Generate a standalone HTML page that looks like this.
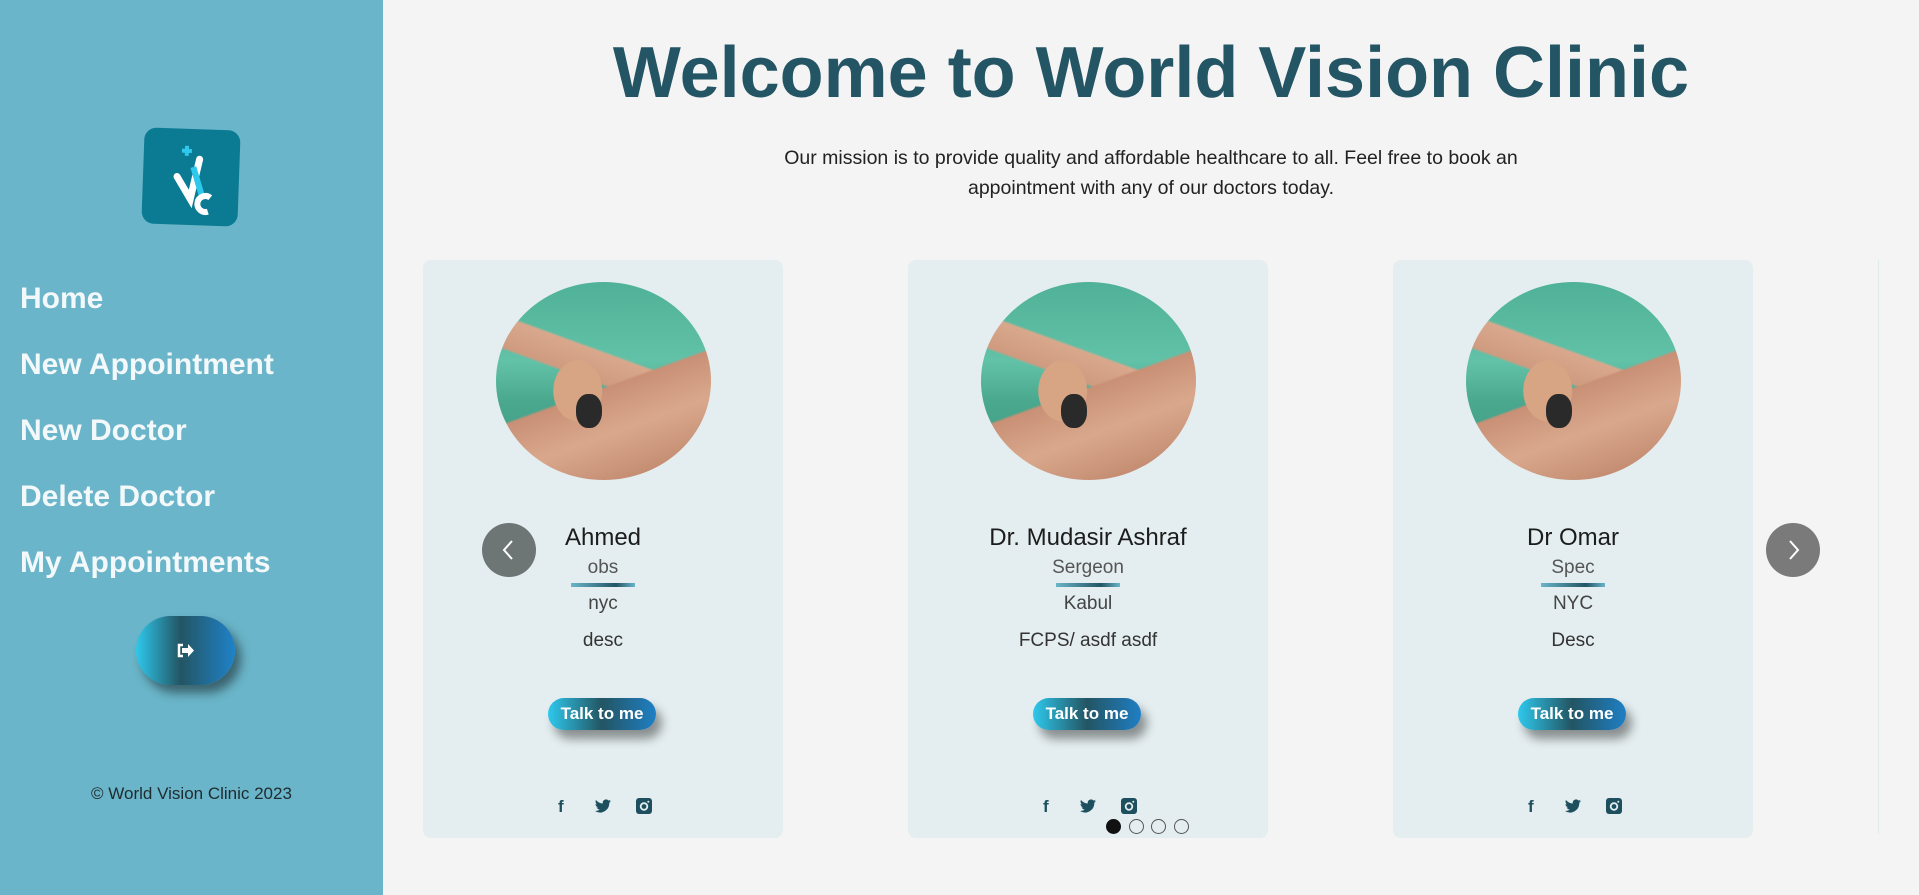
<!DOCTYPE html>
<html><head><meta charset="utf-8"><style>
*{margin:0;padding:0;box-sizing:border-box}
body{width:1919px;height:895px;overflow:hidden;background:#f4f4f4;font-family:"Liberation Sans","DejaVu Sans",sans-serif;position:relative}
.side{position:absolute;left:0;top:0;width:383px;height:895px;background:#6ab5c9}
.logo{position:absolute;left:143px;top:129px;width:96px;height:96px;background:#0b7a93;border-radius:12px;transform:rotate(2deg)}
.nav{position:absolute;left:20px;color:#f3f8fa;font-size:30px;font-weight:bold;line-height:36px}
.logout{position:absolute;left:136px;top:616px;width:99px;height:69px;border-radius:35px;background:linear-gradient(90deg,#2ec8ec,#235563 45%,#1f82c8);box-shadow:6px 8px 10px rgba(0,0,0,.45)}
.copy{position:absolute;left:0;width:383px;text-align:center;top:784px;font-size:17px;color:#1f2b30}
h1{position:absolute;left:383px;width:1536px;text-align:center;top:32px;font-size:72px;font-weight:bold;color:#235565;letter-spacing:0px}
.mission{position:absolute;left:764px;width:774px;top:143px;text-align:center;font-size:19.5px;line-height:30px;color:#222}
.card{position:absolute;top:260px;width:360px;height:578px;background:#e4eef0;border-radius:8px;text-align:center}
.img{position:absolute;left:73px;top:22px;width:215px;height:198px;border-radius:50%;overflow:hidden;
background:
radial-gradient(ellipse 40px 50px at 38% 55%,#d8a584 60%,transparent 62%),
linear-gradient(160deg,transparent 52%,#c99076 53%,#d9a88c 70%,#b87d63 100%),
linear-gradient(20deg,transparent 48%,#cf9b80 49%,#d9a88c 60%,transparent 61%),
linear-gradient(180deg,#4fb197 0%,#62c2a8 40%,#4aa88e 60%,#3e9a80 100%)}
.watch{position:absolute;left:80px;top:112px;width:26px;height:34px;border-radius:45%;background:#2a2a2a}
.name{position:absolute;top:264px;width:100%;font-size:24px;color:#1c1c1c}
.spec{position:absolute;top:297px;width:100%;font-size:19px;color:#555}
.line{position:absolute;top:323px;left:148px;width:64px;height:4px;background:linear-gradient(90deg,#6ab5c9,#235565 70%,#6ab5c9)}
.city{position:absolute;top:333px;width:100%;font-size:19px;color:#444}
.desc{position:absolute;top:370px;width:100%;font-size:19px;color:#333}
.btn{position:absolute;top:438px;left:125px;width:108px;height:32px;border-radius:16px;background:linear-gradient(90deg,#2ec8ec,#235563 50%,#1f7fc4);color:#fff;font-weight:900;font-size:17px;line-height:32px;box-shadow:6px 9px 10px rgba(0,0,0,.4)}
.soc{position:absolute;top:537px;width:100%;height:18px}
.soc span{position:absolute;top:0;color:#1e4f5e;font-weight:bold;font-size:17px}
.arrow{position:absolute;top:523px;width:54px;height:54px;border-radius:50%;background:#6e7575}
.arrow svg{position:absolute;left:15px;top:15px}
.dot{position:absolute;top:819px;width:15px;height:15px;border-radius:50%;border:1.5px solid #555}
</style></head><body>
<div class="side">
 <div class="logo"><svg width="96" height="96" viewBox="0 0 96 96"><path d="M38 22h10M43 17v10" stroke="#2ec8ec" stroke-width="4"/><path d="M34 48l14 22 8-40" stroke="#fff" stroke-width="7" fill="none" stroke-linecap="round"/><path d="M50 38l10 30" stroke="#2ec8ec" stroke-width="6"/><path d="M68 68a8 8 0 1 0 -2 14" stroke="#fff" stroke-width="6" fill="none"/></svg></div>
 <div class="nav" style="top:281px">Home</div>
 <div class="nav" style="top:347px">New Appointment</div>
 <div class="nav" style="top:413px">New Doctor</div>
 <div class="nav" style="top:479px">Delete Doctor</div>
 <div class="nav" style="top:545px">My Appointments</div>
 <div class="logout"><svg style="position:absolute;left:41px;top:27px" width="18" height="15" viewBox="0 0 18 15"><path d="M6 2H2v11h4" stroke="#fff" stroke-width="2.5" fill="none"/><path d="M5 5h6V1l6 6.5-6 6.5V10H5z" fill="#fff"/></svg></div>
 <div class="copy">© World Vision Clinic 2023</div>
</div>
<h1>Welcome to World Vision Clinic</h1>
<div class="mission">Our mission is to provide quality and affordable healthcare to all. Feel free to book an appointment with any of our doctors today.</div>

<div class="card" style="left:423px"><div class="img"><div class="watch"></div></div>
<div class="name">Ahmed</div><div class="spec">obs</div><div class="line"></div><div class="city">nyc</div><div class="desc">desc</div>
<div class="btn">Talk to me</div>
<div class="soc"><span style="left:135px">f</span><svg style="position:absolute;left:172px;top:2px" width="16" height="14" viewBox="0 0 16 14"><path d="M16 2c-.6.3-1.2.4-1.9.5.7-.4 1.2-1 1.4-1.8-.6.4-1.3.6-2.1.8A3.3 3.3 0 0 0 7.8 4.5 9.3 9.3 0 0 1 1 1 3.3 3.3 0 0 0 2 5.4c-.5 0-1-.2-1.5-.4 0 1.6 1.1 2.9 2.6 3.2-.5.1-1 .2-1.5.1.4 1.3 1.6 2.3 3.1 2.3A6.6 6.6 0 0 1 0 12a9.300 9.300 0 0 0 14.300-8.300C15 3.300 15.500 2.700 16 2z" fill="#1e4f5e"/></svg><svg style="position:absolute;left:213px;top:1px" width="16" height="16" viewBox="0 0 16 16"><rect width="16" height="16" rx="3" fill="#1e4f5e"/><circle cx="8" cy="8.5" r="3.3" stroke="#e4eef0" stroke-width="1.8" fill="none"/><circle cx="12.3" cy="3.7" r="1" fill="#e4eef0"/></svg></div>
</div>

<div class="card" style="left:908px"><div class="img"><div class="watch"></div></div>
<div class="name">Dr. Mudasir Ashraf</div><div class="spec">Sergeon</div><div class="line"></div><div class="city">Kabul</div><div class="desc">FCPS/ asdf asdf</div>
<div class="btn">Talk to me</div>
<div class="soc"><span style="left:135px">f</span><svg style="position:absolute;left:172px;top:2px" width="16" height="14" viewBox="0 0 16 14"><path d="M16 2c-.6.3-1.2.4-1.9.5.7-.4 1.2-1 1.4-1.8-.6.4-1.3.6-2.1.8A3.3 3.3 0 0 0 7.8 4.5 9.3 9.3 0 0 1 1 1 3.3 3.3 0 0 0 2 5.4c-.5 0-1-.2-1.5-.4 0 1.6 1.1 2.9 2.6 3.2-.5.1-1 .2-1.5.1.4 1.3 1.6 2.3 3.1 2.3A6.6 6.6 0 0 1 0 12a9.300 9.300 0 0 0 14.300-8.300C15 3.300 15.500 2.700 16 2z" fill="#1e4f5e"/></svg><svg style="position:absolute;left:213px;top:1px" width="16" height="16" viewBox="0 0 16 16"><rect width="16" height="16" rx="3" fill="#1e4f5e"/><circle cx="8" cy="8.5" r="3.3" stroke="#e4eef0" stroke-width="1.8" fill="none"/><circle cx="12.3" cy="3.7" r="1" fill="#e4eef0"/></svg></div>
</div>

<div class="card" style="left:1393px"><div class="img"><div class="watch"></div></div>
<div class="name">Dr Omar</div><div class="spec">Spec</div><div class="line"></div><div class="city">NYC</div><div class="desc">Desc</div>
<div class="btn">Talk to me</div>
<div class="soc"><span style="left:135px">f</span><svg style="position:absolute;left:172px;top:2px" width="16" height="14" viewBox="0 0 16 14"><path d="M16 2c-.6.3-1.2.4-1.9.5.7-.4 1.2-1 1.4-1.8-.6.4-1.3.6-2.1.8A3.3 3.3 0 0 0 7.8 4.5 9.3 9.3 0 0 1 1 1 3.3 3.3 0 0 0 2 5.4c-.5 0-1-.2-1.5-.4 0 1.6 1.1 2.9 2.6 3.2-.5.1-1 .2-1.5.1.4 1.3 1.6 2.3 3.1 2.3A6.6 6.6 0 0 1 0 12a9.300 9.300 0 0 0 14.300-8.300C15 3.300 15.500 2.700 16 2z" fill="#1e4f5e"/></svg><svg style="position:absolute;left:213px;top:1px" width="16" height="16" viewBox="0 0 16 16"><rect width="16" height="16" rx="3" fill="#1e4f5e"/><circle cx="8" cy="8.5" r="3.3" stroke="#e4eef0" stroke-width="1.8" fill="none"/><circle cx="12.3" cy="3.7" r="1" fill="#e4eef0"/></svg></div>
</div>
<div style="position:absolute;left:1878px;top:260px;width:1px;height:574px;background:#dfecec"></div>

<div class="arrow" style="left:482px"><svg width="24" height="24" viewBox="0 0 24 24"><path d="M15 3L7 12l8 9" stroke="#fff" stroke-width="2" fill="none"/></svg></div>
<div class="arrow" style="left:1766px;background:#7a7a7a"><svg width="24" height="24" viewBox="0 0 24 24"><path d="M9 3l8 9-8 9" stroke="#fff" stroke-width="2" fill="none"/></svg></div>

<div class="dot" style="left:1106px;background:#111;border-color:#111"></div>
<div class="dot" style="left:1129px"></div>
<div class="dot" style="left:1151px"></div>
<div class="dot" style="left:1174px"></div>
</body></html>
